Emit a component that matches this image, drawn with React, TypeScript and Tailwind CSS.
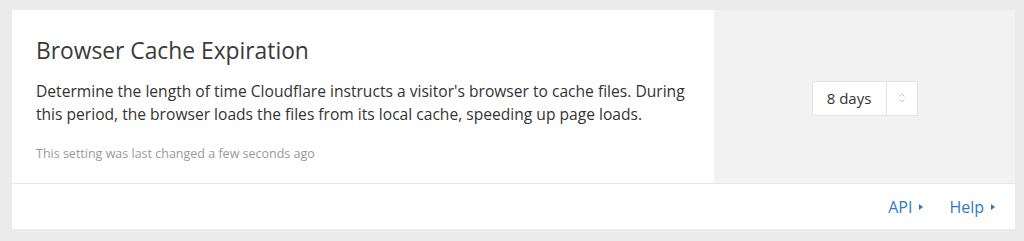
const font = { fontFamily: '"Open Sans", "Liberation Sans", sans-serif' };

function Caret() {
  return (
    <svg width="4" height="6" viewBox="0 0 4 6" className="ml-[7px] inline-block">
      <path d="M0 0 L4 3 L0 6 Z" fill="currentColor" />
    </svg>
  );
}

export default function App() {
  return (
    <div className="h-[241px] w-full bg-[#ebebeb] pl-[12px] pr-[9px] pt-[10px]" style={font}>
      <div className="flex flex-col bg-white">
        <div className="flex h-[174px] border-b border-[#e6e6e6]">
          <div className="flex-1 pl-[24px] pr-[20px] pt-[26px]">
            <h2 className="text-[22.8px] leading-[30px] text-[#3a3a3a]">Browser Cache Expiration</h2>
            <p className="mt-[14px] text-[15.6px] leading-[23px] text-[#333]">
              Determine the length of time Cloudflare instructs a visitor's browser to cache files. During
              <br />
              this period, the browser loads the files from its local cache, speeding up page loads.
            </p>
            <p className="mt-[19px] text-[12.5px] leading-[17px] text-[#999]">
              This setting was last changed a few seconds ago
            </p>
          </div>
          <div className="flex w-[301px] items-center justify-center bg-[#f2f2f2] pt-[3px]">
            <div className="flex h-[35px] items-stretch rounded-[2px] border border-[#e3e3e3] bg-white">
              <div className="flex w-[73px] items-center justify-center text-[15px] text-[#333]">8 days</div>
              <div className="flex w-[31px] items-center justify-center border-l border-[#e3e3e3]">
                <svg width="6" height="10" viewBox="0 0 6 10">
                  <path d="M0.5 3.5 L3 1 L5.5 3.5" stroke="#c4c4c4" fill="none" strokeWidth="1" />
                  <path d="M0.5 6.5 L3 9 L5.5 6.5" stroke="#c4c4c4" fill="none" strokeWidth="1" />
                </svg>
              </div>
            </div>
          </div>
        </div>
        <div className="flex h-[45px] items-center justify-end gap-[26px] pr-[20px] pt-[1px] text-[16px] text-[#2f7bbf]">
          <a className="flex items-center">
            API
            <Caret />
          </a>
          <a className="flex items-center">
            Help
            <Caret />
          </a>
        </div>
      </div>
    </div>
  );
}
